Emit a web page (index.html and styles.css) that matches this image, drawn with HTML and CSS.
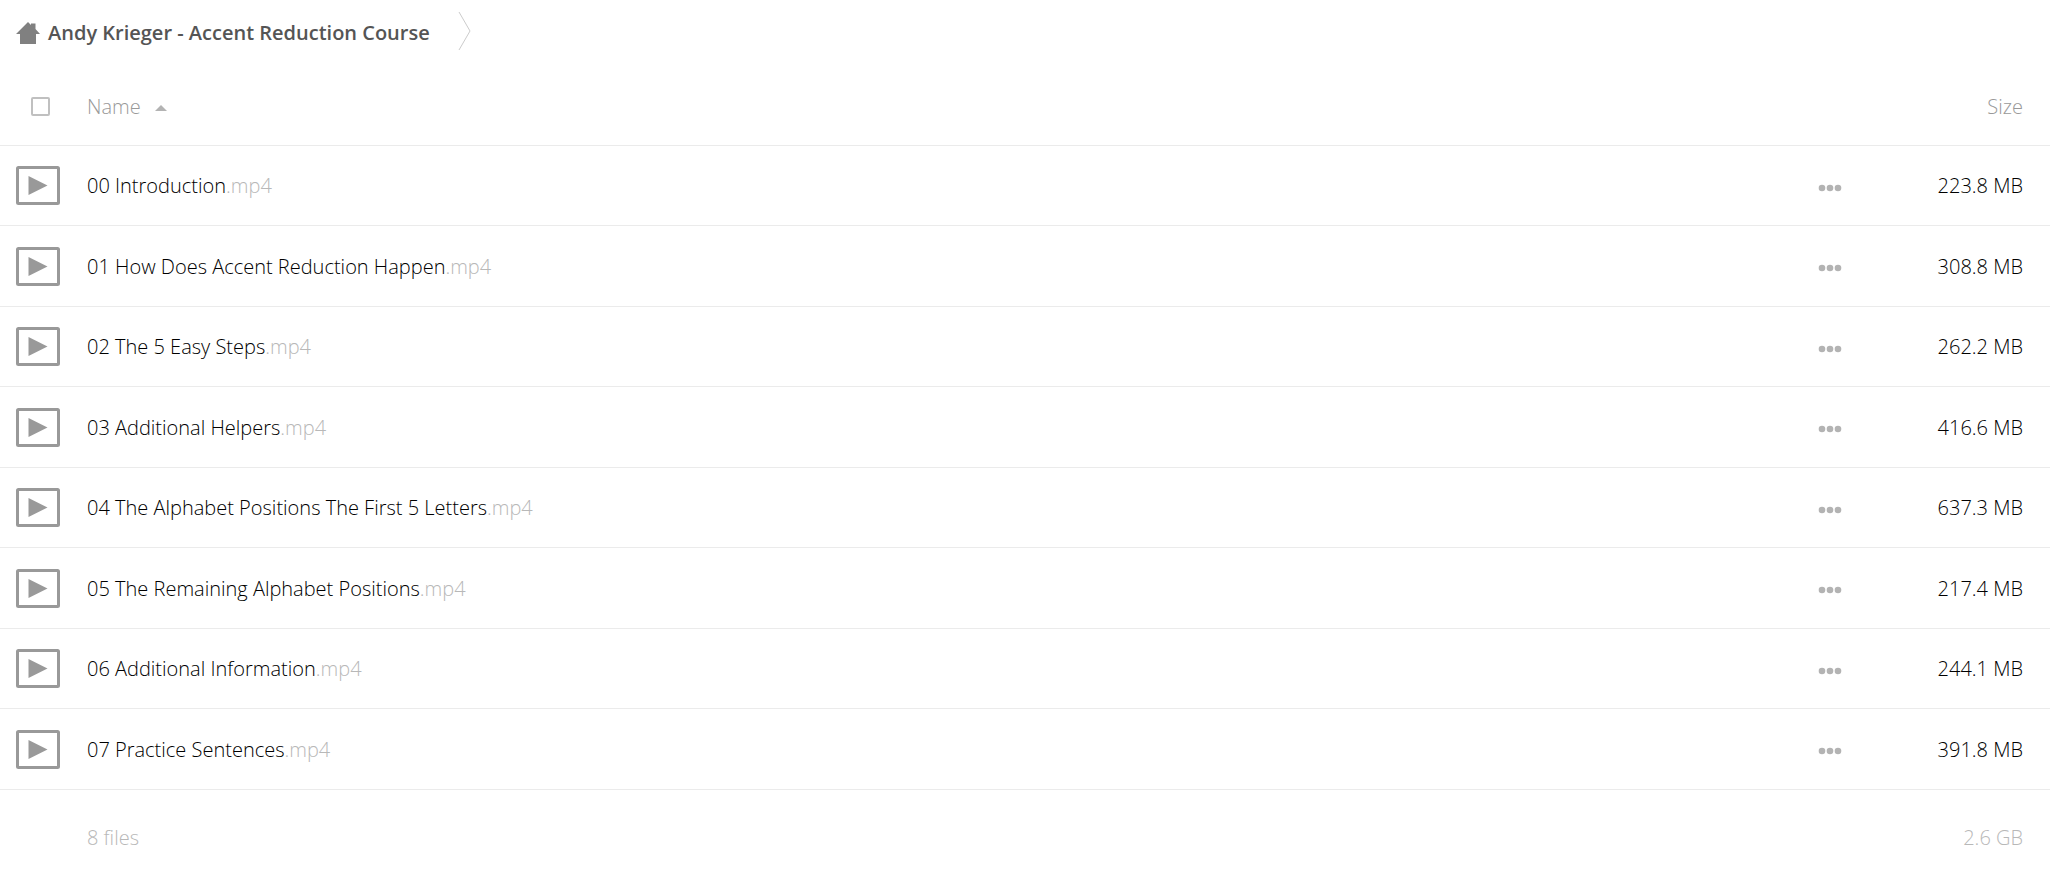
FILE: index.html
```
<!doctype html>
<html lang="en">
	<head>
	<meta charset="utf-8">
	<title>Andy Krieger - Accent Reduction Course</title>
	<link rel="stylesheet" href="styles.css">
	</head>
	<body>

		<svg class="sprite" aria-hidden="true">
			<symbol id="icon-video" viewBox="0 0 44 39">
				<rect x="1.5" y="1.5" width="41" height="36" rx="1" fill="none" stroke="#999" stroke-width="3"/>
				<path d="M12.500 10l19 9.500-19 9.500z" fill="#999"/>
			</symbol>
			<symbol id="icon-dots" viewBox="0 0 24 8">
				<circle cx="4" cy="4" r="3.300"/>
				<circle cx="12" cy="4" r="3.300"/>
				<circle cx="20" cy="4" r="3.300"/>
			</symbol>
		</svg>

		<nav class="breadcrumb">
			<a class="crumb" href="#">
				<svg class="icon-home" viewBox="0 0 24 22"><path d="M12 0l3 3V1.500h4.500V7L24 12h-4v10H4V12H0z"/></svg>
				<span>Andy Krieger - Accent Reduction Course</span>
			</a>
			<svg class="crumb-arrow" viewBox="0 0 14 40"><path d="M1 1l11 19L1 39"/></svg>
		</nav>

		<table class="files">
			<thead>
				<tr>
					<th class="col-icon"><input class="select-all" type="checkbox" aria-label="Select all"></th>
					<th class="col-name"><a class="sort" href="#">Name <span class="sort-arrow"></span></a></th>
					<th class="col-actions"></th>
					<th class="col-size"><a class="sort" href="#">Size</a></th>
				</tr>
			</thead>
			<tbody>
				<tr>
					<td class="col-icon"><svg class="icon-video"><use href="#icon-video"/></svg></td>
					<td class="col-name"><a href="#">00 Introduction<span class="ext">.mp4</span></a></td>
					<td class="col-actions"><button class="more" type="button" aria-label="Actions"><svg class="icon-dots"><use href="#icon-dots"/></svg></button></td>
					<td class="col-size">223.8 MB</td>
				</tr>
				<tr>
					<td class="col-icon"><svg class="icon-video"><use href="#icon-video"/></svg></td>
					<td class="col-name"><a href="#">01 How Does Accent Reduction Happen<span class="ext">.mp4</span></a></td>
					<td class="col-actions"><button class="more" type="button" aria-label="Actions"><svg class="icon-dots"><use href="#icon-dots"/></svg></button></td>
					<td class="col-size">308.8 MB</td>
				</tr>
				<tr>
					<td class="col-icon"><svg class="icon-video"><use href="#icon-video"/></svg></td>
					<td class="col-name"><a href="#">02 The 5 Easy Steps<span class="ext">.mp4</span></a></td>
					<td class="col-actions"><button class="more" type="button" aria-label="Actions"><svg class="icon-dots"><use href="#icon-dots"/></svg></button></td>
					<td class="col-size">262.2 MB</td>
				</tr>
				<tr>
					<td class="col-icon"><svg class="icon-video"><use href="#icon-video"/></svg></td>
					<td class="col-name"><a href="#">03 Additional Helpers<span class="ext">.mp4</span></a></td>
					<td class="col-actions"><button class="more" type="button" aria-label="Actions"><svg class="icon-dots"><use href="#icon-dots"/></svg></button></td>
					<td class="col-size">416.6 MB</td>
				</tr>
				<tr>
					<td class="col-icon"><svg class="icon-video"><use href="#icon-video"/></svg></td>
					<td class="col-name"><a href="#">04 The Alphabet Positions The First 5 Letters<span class="ext">.mp4</span></a></td>
					<td class="col-actions"><button class="more" type="button" aria-label="Actions"><svg class="icon-dots"><use href="#icon-dots"/></svg></button></td>
					<td class="col-size">637.3 MB</td>
				</tr>
				<tr>
					<td class="col-icon"><svg class="icon-video"><use href="#icon-video"/></svg></td>
					<td class="col-name"><a href="#">05 The Remaining Alphabet Positions<span class="ext">.mp4</span></a></td>
					<td class="col-actions"><button class="more" type="button" aria-label="Actions"><svg class="icon-dots"><use href="#icon-dots"/></svg></button></td>
					<td class="col-size">217.4 MB</td>
				</tr>
				<tr>
					<td class="col-icon"><svg class="icon-video"><use href="#icon-video"/></svg></td>
					<td class="col-name"><a href="#">06 Additional Information<span class="ext">.mp4</span></a></td>
					<td class="col-actions"><button class="more" type="button" aria-label="Actions"><svg class="icon-dots"><use href="#icon-dots"/></svg></button></td>
					<td class="col-size">244.1 MB</td>
				</tr>
				<tr>
					<td class="col-icon"><svg class="icon-video"><use href="#icon-video"/></svg></td>
					<td class="col-name"><a href="#">07 Practice Sentences<span class="ext">.mp4</span></a></td>
					<td class="col-actions"><button class="more" type="button" aria-label="Actions"><svg class="icon-dots"><use href="#icon-dots"/></svg></button></td>
					<td class="col-size">391.8 MB</td>
				</tr>
			</tbody>
			<tfoot>
				<tr>
					<td class="col-icon"></td>
					<td class="col-name">8 files</td>
					<td class="col-actions"></td>
					<td class="col-size">2.6 GB</td>
				</tr>
			</tfoot>
		</table>

	</body>
</html>
```

FILE: styles.css
```
* {
	box-sizing: border-box;
}

body {
	margin: 0;
	background-color: #fff;
	color: #000;
	font: 300 20px/28px "Open Sans", sans-serif;
}

a {
	color: inherit;
	text-decoration: none;
}

svg {
	display: block;
}

.sprite {
	display: none;
}

/* breadcrumb */
.breadcrumb {
	display: flex;
	align-items: center;
	gap: 28px;
	height: 64px;
	padding: 0 16px;
}

.crumb {
	display: flex;
	align-items: center;
	gap: 8px;
	padding-top: 1px;
	color: #555;
	font-weight: 600;
}

.icon-home {
	width: 24px;
	height: 22px;
	fill: #808080;
}

.crumb-arrow {
	width: 14px;
	height: 40px;
	margin-bottom: 2px;
	fill: none;
	stroke: #ccc;
}

/* file list */
.files {
	width: 100%;
	border-collapse: separate;
	border-spacing: 0;
}

.files th,
.files td {
	height: 80px;
	padding: 0;
	border-bottom: 1px solid #ebebeb;
	font-weight: 300;
	text-align: left;
}

.files th {
	height: 82px;
	padding-top: 4px;
	color: #999;
}

.files tbody tr:nth-child(even) td {
	height: 81px;
}

.files tfoot td {
	height: 96px;
	border-bottom: 0;
	color: #b8b8b8;
}

.files .col-icon {
	width: 87px;
	padding-left: 16px;
}

.files .col-actions {
	width: 78px;
}

.files .col-size {
	width: 170px;
	padding-right: 27px;
	text-align: right;
}

.files tbody .col-name,
.files tbody .col-size {
	padding-top: 1px;
}

.select-all {
	display: block;
	appearance: none;
	width: 19px;
	height: 19px;
	margin: 0 0 0 15px;
	border: 2px solid #c0c0c0;
	border-radius: 2px;
}

.sort-arrow {
	display: inline-block;
	margin-left: 9px;
	border: 6px solid transparent;
	border-top: 0;
	border-bottom-color: #b3b3b3;
	vertical-align: 3px;
}

.ext {
	color: #b8b8b8;
}

.icon-video {
	width: 44px;
	height: 39px;
}

.more {
	display: block;
	padding: 8px 16px 4px;
	border: 0;
	background: none;
	cursor: pointer;
}

.icon-dots {
	width: 24px;
	height: 8px;
	fill: #b3b3b3;
}
```
